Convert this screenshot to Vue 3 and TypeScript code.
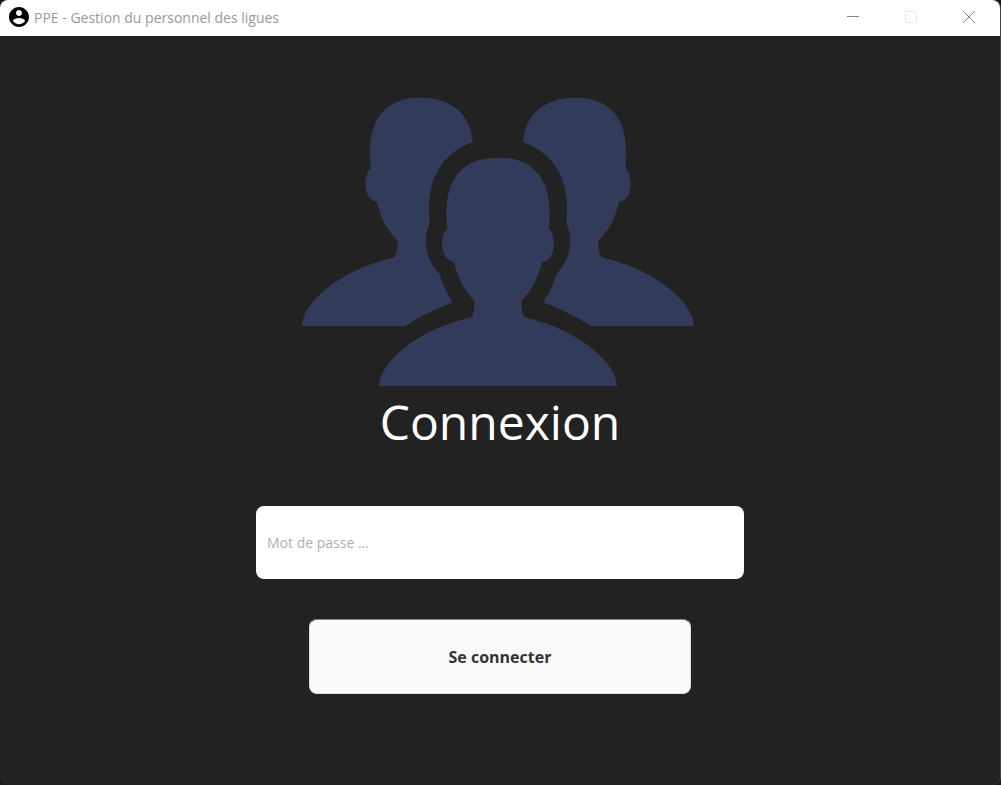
<script setup lang="ts">
import { ref } from 'vue'

const password = ref<string>('')
</script>

<template>
  <div class="window">
    <header class="titlebar">
      <svg class="app-icon" viewBox="2 2 20 20" aria-hidden="true">
        <path
          d="M12 2C6.48 2 2 6.48 2 12s4.48 10 10 10 10-4.48 10-10S17.52 2 12 2zm0 3c1.66 0 3 1.34 3 3s-1.34 3-3 3-3-1.34-3-3 1.34-3 3-3zm0 14.2c-2.5 0-4.71-1.28-6-3.22.03-1.99 4-3.08 6-3.08 1.99 0 5.97 1.09 6 3.08-1.29 1.94-3.5 3.22-6 3.22z"
        />
      </svg>
      <span class="title">PPE - Gestion du personnel des ligues</span>
      <div class="controls">
        <button type="button" class="control" aria-label="Réduire">
          <svg viewBox="0 0 14 14"><path d="M1 6.5H13" /></svg>
        </button>
        <button type="button" class="control dim" aria-label="Agrandir" disabled>
          <svg viewBox="0 0 14 14"><rect x="1.5" y="1.5" width="11" height="11" rx="1" /></svg>
        </button>
        <button type="button" class="control" aria-label="Fermer">
          <svg viewBox="0 0 14 14"><path d="M1 1L13 13M13 1L1 13" /></svg>
        </button>
      </div>
    </header>

    <main class="content">
      <svg class="people" viewBox="0 0 396 290" aria-hidden="true">
        <defs>
          <path
            id="person-behind"
            d="M119 0.7C150 0.7 169 18 170.8 45C142 56 127 78 127 112L127.5 127C121.5 138 121.5 161 137.5 177C141 188 145 197 151 205.5C135 211 117 220 103 229H0C1 203 43 171 92 160.5C95 157 96 151 95.5 144C86 134 78 120 75 105C61.5 104 60 80 68.7 71C64 27 79 0.7 119 0.7Z"
          />
        </defs>
        <use href="#person-behind" />
        <use href="#person-behind" transform="translate(392 0) scale(-1 1)" />
        <path
          d="M196 60.7C156 60.7 140.5 87 145.2 131C137 140 138.5 164 152 165C155 180 163 194 172.5 204C173 211 172 217 169 220.5C120 231 78 263 77 289H315C314 263 272 231 223 220.5C220 217 219 211 219.5 204C229 194 237 180 240 165C253.5 164 255 140 246.8 131C251.5 87 236 60.7 196 60.7Z"
        />
      </svg>
      <h1>Connexion</h1>
      <form class="form" @submit.prevent>
        <input
          v-model="password"
          class="password"
          type="password"
          aria-label="Mot de passe"
          placeholder="Mot de passe ..."
        />
        <button class="submit" type="submit">Se connecter</button>
      </form>
    </main>
  </div>
</template>

<style>
body {
  margin: 0;
  background: #181818;
}
</style>

<style scoped>
.window {
  box-sizing: border-box;
  min-height: 100vh;
  display: flex;
  flex-direction: column;
  border-right: 1px solid #444444;
  border-radius: 8px;
  background: #222222;
  font-family: "Open Sans", "Noto Sans", sans-serif;
}

.titlebar {
  display: flex;
  align-items: center;
  height: 36px;
  box-sizing: border-box;
  padding: 0 2px 2px 9px;
  border-radius: 8px 8px 0 0;
  background: #ffffff;
}

.app-icon {
  width: 20px;
  height: 20px;
  margin-right: 5px;
  fill: #000000;
}

.title {
  padding-top: 2px;
  font-size: 14px;
  line-height: 20px;
  color: #999999;
}

.controls {
  display: flex;
  margin-left: auto;
}

.control {
  display: flex;
  align-items: center;
  justify-content: center;
  width: 58px;
  height: 34px;
  padding: 0;
  border: 0;
  background: transparent;
}

.control svg {
  width: 14px;
  height: 14px;
  fill: none;
  stroke: #888888;
}

.control.dim svg {
  stroke: #e8e8e8;
}

.content {
  display: flex;
  flex-direction: column;
  align-items: center;
  padding: 61px 24px 24px;
}

.people {
  width: 396px;
  max-width: 100%;
  fill: #333b5a;
}

h1 {
  margin: 0;
  font-size: 48px;
  line-height: 70px;
  font-weight: 500;
  color: #ffffff;
}

.form {
  display: flex;
  flex-direction: column;
  align-items: center;
  gap: 40px;
  width: 100%;
  margin-top: 49px;
}

.password {
  box-sizing: border-box;
  width: 100%;
  max-width: 488px;
  height: 73px;
  padding: 0 11px;
  border: 0;
  border-radius: 8px;
  background: #ffffff;
  font: 14px/20px "Open Sans", "Noto Sans", sans-serif;
  color: #333333;
}

.password::placeholder {
  color: #b0b0b0;
  opacity: 1;
}

.submit {
  width: 100%;
  max-width: 382px;
  height: 75px;
  padding: 0;
  border: 1px solid #dddddd;
  border-top-color: #888888;
  border-radius: 8px;
  background: #fafafa;
  font: 700 16px/24px "Open Sans", "Noto Sans", sans-serif;
  color: #333333;
}
</style>
